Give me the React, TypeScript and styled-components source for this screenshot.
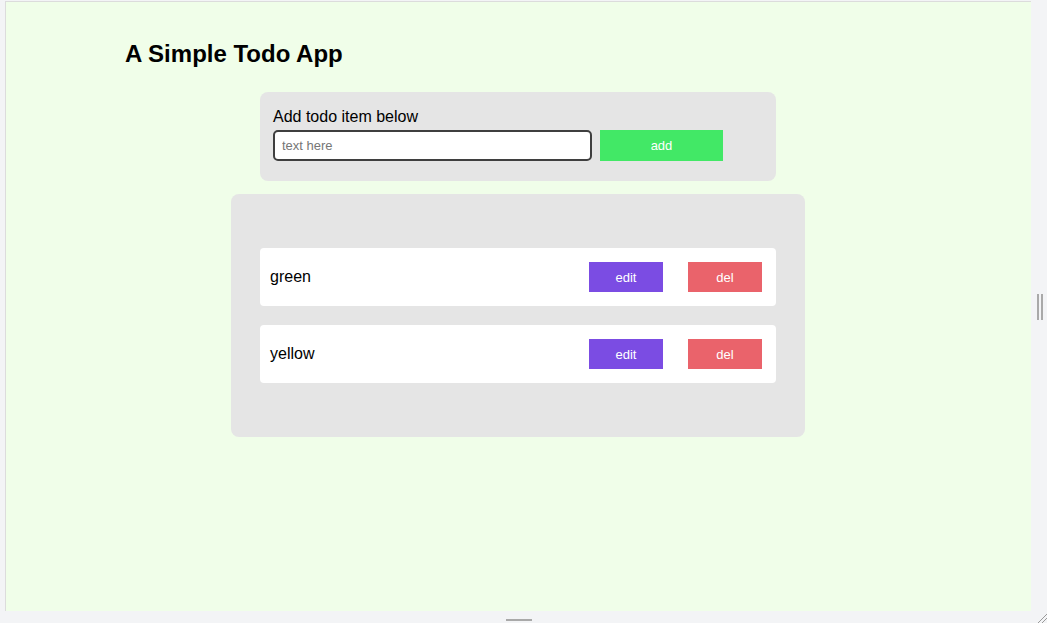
import React from "react";
import styled, { createGlobalStyle } from "styled-components";

const GlobalStyle = createGlobalStyle`
  html, body { margin: 0; padding: 0; }
  body {
    background: #f3f4f6;
    font-family: "Liberation Sans", Arial, sans-serif;
    overflow: hidden;
  }
`;

const Shell = styled.div`
  width: 1047px;
  height: 623px;
  display: flex;
  flex-direction: column;
  background: #f3f4f6;
`;

const TopRow = styled.div`
  display: flex;
  height: 611px;
`;

const PreviewFrame = styled.div`
  box-sizing: border-box;
  width: 1026px;
  height: 610px;
  margin: 1px 0 0 5px;
  border-top: 1px solid #dcdcdc;
  border-left: 1px solid #dcdcdc;
  background: #f0fee9;
  padding: 38px 1px 0 0;
`;

const RightGutter = styled.div`
  flex: 1;
  display: flex;
  align-items: center;
  justify-content: center;
  gap: 2px;
  padding-top: 2px;
  padding-left: 1px;
`;

const GripBar = styled.div`
  width: 2px;
  height: 26px;
  background: #a9a9a9;
`;

const BottomBar = styled.div`
  height: 12px;
  display: flex;
`;

const BottomHandleArea = styled.div`
  width: 1026px;
  margin-left: 6px;
  display: flex;
  justify-content: center;
  padding-top: 8px;
  box-sizing: border-box;
`;

const BottomHandle = styled.div`
  width: 26px;
  height: 2px;
  background: #a9a9a9;
`;

const CornerArea = styled.div`
  flex: 1;
  display: flex;
  align-items: flex-end;
  justify-content: flex-end;
`;

const Title = styled.h1`
  margin: 0 0 24px;
  padding-left: 119px;
  font-size: 24px;
  line-height: 28px;
  font-weight: 700;
  color: #000;
`;

const Column = styled.div`
  display: flex;
  flex-direction: column;
  align-items: center;
  gap: 13px;
`;

const FormCard = styled.form`
  box-sizing: border-box;
  width: 516px;
  padding: 16px 13px 20px;
  border-radius: 8px;
  background: #e5e5e5;
`;

const Label = styled.label`
  display: block;
  font-size: 16px;
  line-height: 18px;
  margin-bottom: 4px;
  color: #000;
`;

const InputRow = styled.div`
  display: flex;
  gap: 8px;
`;

const TextInput = styled.input`
  box-sizing: border-box;
  width: 319px;
  height: 31px;
  border: 2px solid #3f3f3f;
  border-radius: 5px;
  padding: 0 7px;
  font-family: "Liberation Sans", Arial, sans-serif;
  font-size: 13px;
  background: #fff;
  outline: none;
  &::placeholder { color: #767676; }
`;

const ColorButton = styled.button<{ $bg: string; $w: number; $h: number }>`
  width: ${(p) => p.$w}px;
  height: ${(p) => p.$h}px;
  border: none;
  padding: 0;
  background: ${(p) => p.$bg};
  color: #fff;
  font-family: "Liberation Sans", Arial, sans-serif;
  font-size: 13px;
  cursor: pointer;
`;

const ListCard = styled.div`
  box-sizing: border-box;
  width: 574px;
  padding: 54px 29px;
  border-radius: 8px;
  background: #e5e5e5;
  display: flex;
  flex-direction: column;
  gap: 19px;
`;

const Item = styled.div`
  height: 58px;
  background: #fff;
  border-radius: 4px;
  display: flex;
  align-items: center;
  padding: 0 14px 0 10px;
`;

const ItemText = styled.span`
  flex: 1;
  font-size: 16px;
  color: #000;
`;

const Actions = styled.div`
  display: flex;
  gap: 25px;
`;

const todos = ["green", "yellow"];

export default function App() {
  return (
    <>
      <GlobalStyle />
      <Shell>
        <TopRow>
          <PreviewFrame>
            <Title>A Simple Todo App</Title>
            <Column>
              <FormCard onSubmit={(e) => e.preventDefault()}>
                <Label htmlFor="todo">Add todo item below</Label>
                <InputRow>
                  <TextInput id="todo" placeholder="text here" />
                  <ColorButton type="submit" $bg="#42e866" $w={123} $h={31}>
                    add
                  </ColorButton>
                </InputRow>
              </FormCard>
              <ListCard>
                {todos.map((t) => (
                  <Item key={t}>
                    <ItemText>{t}</ItemText>
                    <Actions>
                      <ColorButton $bg="#7b4ce3" $w={74} $h={30}>
                        edit
                      </ColorButton>
                      <ColorButton $bg="#ea636b" $w={74} $h={30}>
                        del
                      </ColorButton>
                    </Actions>
                  </Item>
                ))}
              </ListCard>
            </Column>
          </PreviewFrame>
          <RightGutter>
            <GripBar />
            <GripBar />
          </RightGutter>
        </TopRow>
        <BottomBar>
          <BottomHandleArea>
            <BottomHandle />
          </BottomHandleArea>
          <CornerArea>
            <svg width="10" height="10" viewBox="0 0 10 10">
              <line x1="1" y1="10" x2="10" y2="1" stroke="#9a9a9a" strokeWidth="1" />
              <line x1="5" y1="10" x2="10" y2="5" stroke="#9a9a9a" strokeWidth="1" />
            </svg>
          </CornerArea>
        </BottomBar>
      </Shell>
    </>
  );
}
